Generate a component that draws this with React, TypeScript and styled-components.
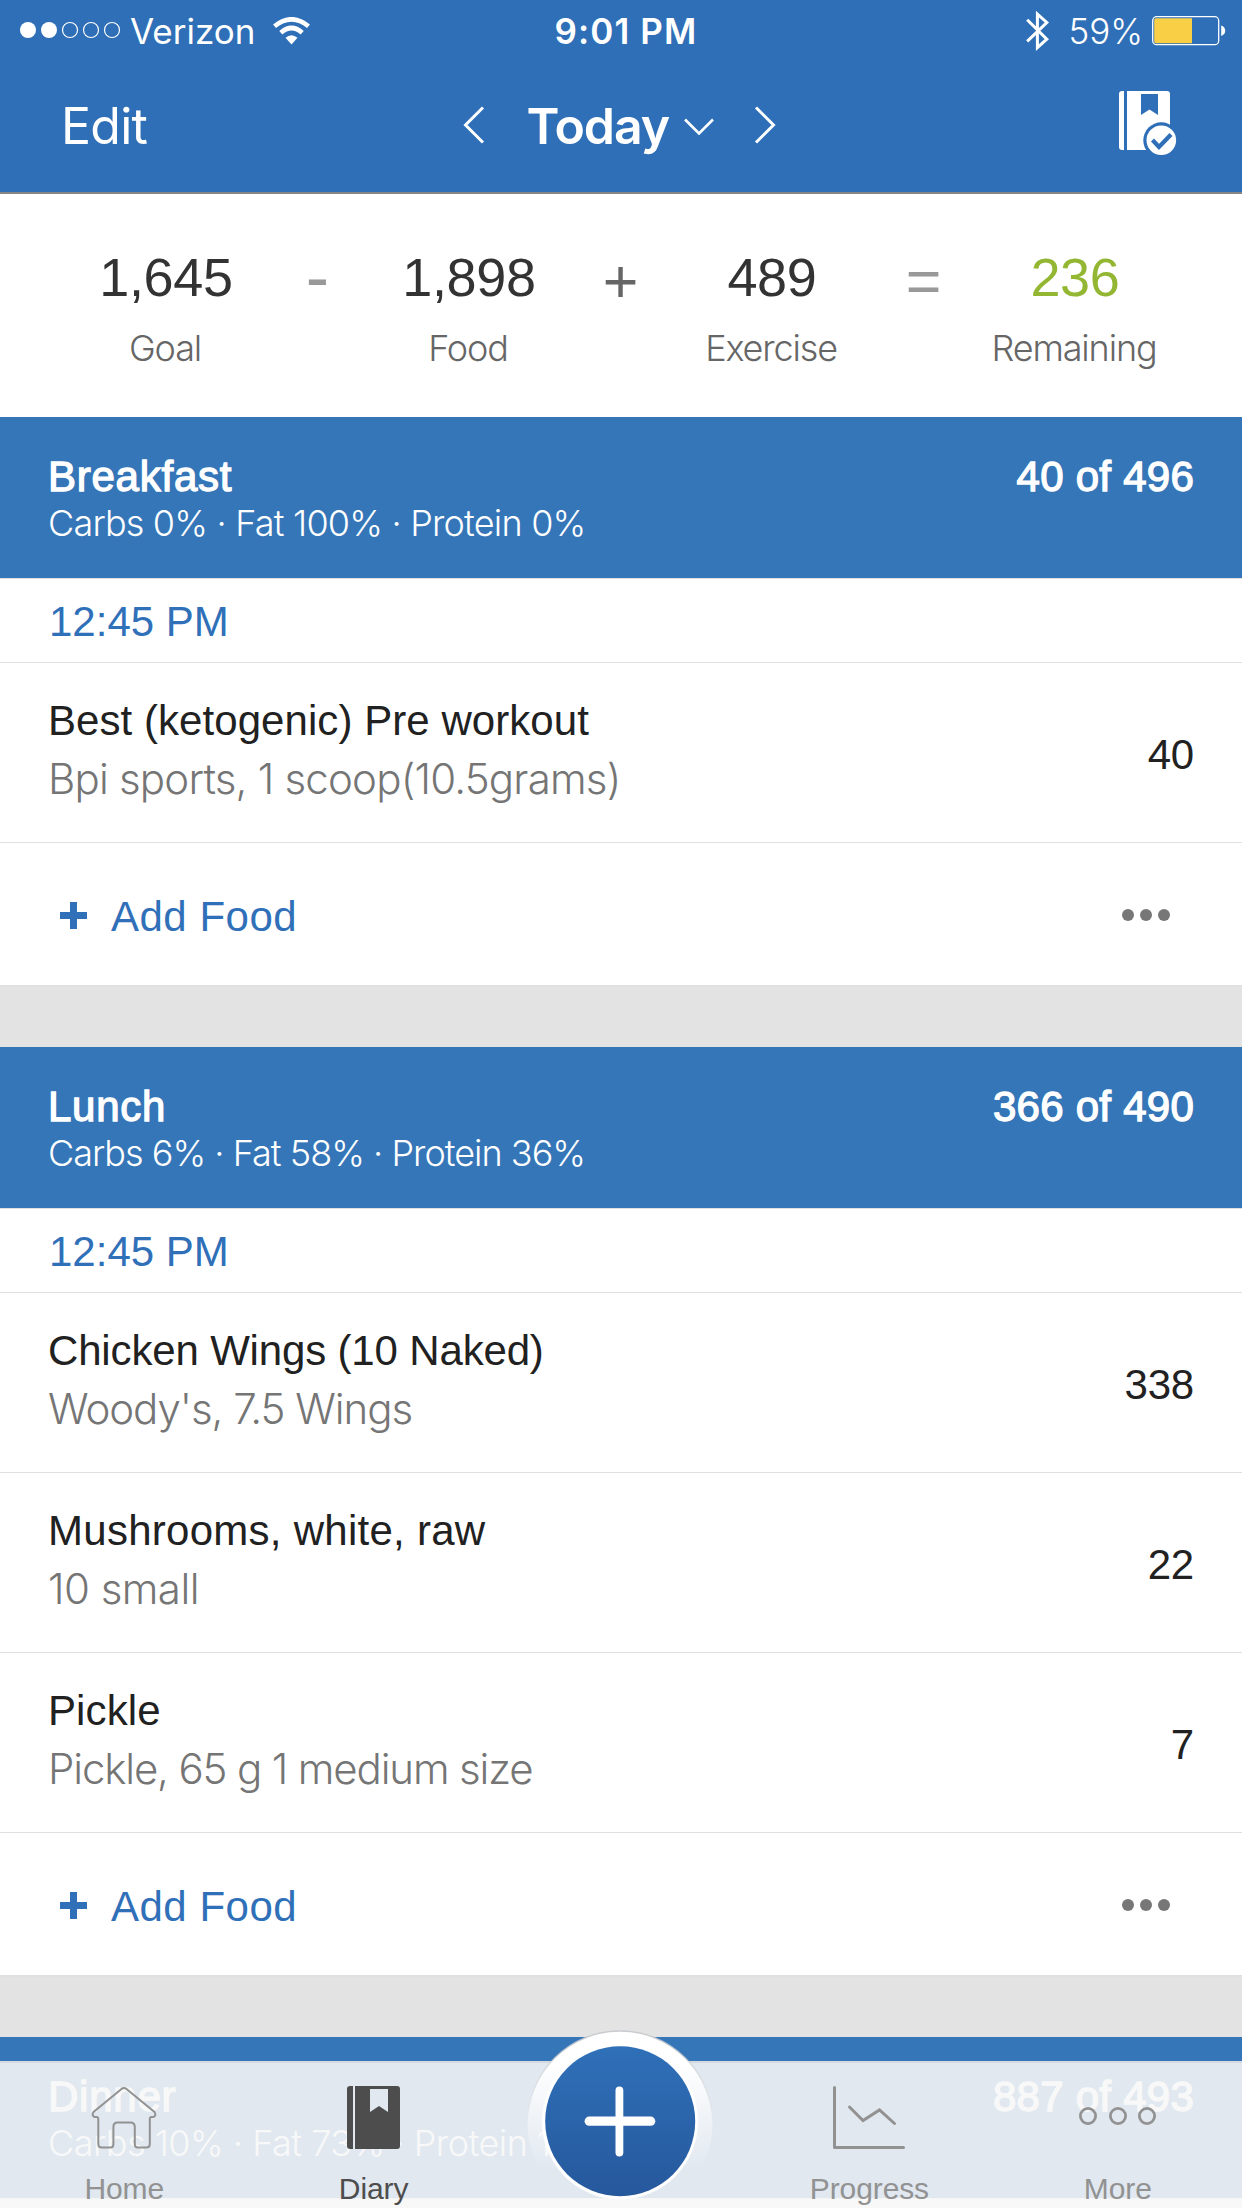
import React from "react";
import styled, { createGlobalStyle } from "styled-components";

const GlobalStyle = createGlobalStyle`
  *, *::before, *::after { box-sizing: border-box; }
  html, body { margin: 0; padding: 0; background: #fff; }
  svg { display: block; flex: none; }
`;

const helvetica = `"Liberation Sans", Arial, sans-serif`;
const system = `Inter, "Liberation Sans", sans-serif`;

const Screen = styled.div`
  position: relative;
  width: 1242px;
  height: 2208px;
  overflow: hidden;
  background: #fff;
  font-family: ${helvetica};
  color: #212121;
`;

/* ---------- header ---------- */

const Header = styled.header`
  height: 194px;
  background: #2f6fb7;
  border-bottom: 2px solid #858585;
  color: #fff;
  font-family: ${system};
`;

const StatusBar = styled.div`
  display: grid;
  grid-template-columns: 1fr auto 1fr;
  align-items: center;
  height: 62px;
  padding: 0 16px 0 19px;
  font-size: 35px;
  line-height: 62px;
`;

const StatusGroup = styled.div<{ $end?: boolean }>`
  display: flex;
  align-items: center;
  justify-content: ${(p) => (p.$end ? "flex-end" : "flex-start")};
`;

const Carrier = styled.span`
  margin: 0 18px 0 9px;
`;

const Clock = styled.span`
  padding-left: 7px;
  font-weight: 600;
  letter-spacing: 1.1px;
`;

const BatteryLevel = styled.span`
  margin: 0 9px 0 18px;
  font-weight: 300;
`;

const NavBar = styled.nav`
  display: grid;
  grid-template-columns: 1fr auto 1fr;
  align-items: center;
  height: 128px;
  padding: 0 65px 0 61px;
  font-size: 50px;
  line-height: 60px;
`;

const EditButton = styled.span`
  letter-spacing: -0.76px;
`;

const DatePicker = styled.div`
  display: flex;
  align-items: center;
`;

const DateLabel = styled.span`
  width: 143px;
  margin: 0 14px 0 42px;
  font-weight: 600;
  letter-spacing: -1.1px;
  white-space: nowrap;
`;

const NextDay = styled.span`
  margin-left: 40px;
`;

const DiaryAction = styled.span`
  justify-self: end;
  margin-top: -6px;
`;

/* ---------- summary ---------- */

const Summary = styled.section`
  display: grid;
  grid-template-columns: 180px 123px 180px 123px 180px 123px 180px;
  height: 223px;
  padding: 53px 76px 0;
`;

const Stat = styled.div`
  display: flex;
  flex-direction: column;
  align-items: center;
`;

const StatValue = styled.div<{ $color?: string }>`
  font-size: 54px;
  line-height: 60px;
  letter-spacing: -0.3px;
  color: ${(p) => p.$color || "#333"};
`;

const StatLabel = styled.div`
  margin-top: 19px;
  padding-right: 2px;
  font: 300 36px / 44px ${system};
  letter-spacing: -1.15px;
  color: #666;
`;

const Operator = styled.div<{ $size: number; $shift: number; $color: string }>`
  padding-top: ${(p) => p.$shift}px;
  text-align: center;
  font-size: ${(p) => p.$size}px;
  line-height: 60px;
  color: ${(p) => p.$color};
`;

/* ---------- meals ---------- */

const MealHeader = styled.div`
  height: 161px;
  padding: 35px 48px 0 48px;
  background: #3576b8;
  color: #fff;
`;

const MealTitleRow = styled.div`
  display: flex;
  justify-content: space-between;
  height: 49px;
  font-size: 42px;
  line-height: 50px;
  letter-spacing: 0.75px;
  -webkit-text-stroke: 1.3px currentColor;
`;

const MealTotal = styled.span`
  letter-spacing: 0.25px;
`;

const Macros = styled.div<{ $tracking: number }>`
  font: 300 36px / 44px ${system};
  letter-spacing: ${(p) => p.$tracking}px;
  white-space: nowrap;
`;

const TimeRow = styled.div`
  height: 85px;
  padding: 18px 47px 0 49px;
  border-top: 1px solid #e0e0e0;
  border-bottom: 1px solid #e0e0e0;
  font-size: 42px;
  line-height: 50px;
  color: #2f70b9;
`;

const FoodRow = styled.div`
  display: flex;
  justify-content: space-between;
  height: 180px;
  padding: 33px 48px 0 48px;
  border-bottom: 1px solid #e0e0e0;
  font-size: 42px;
  line-height: 50px;
`;

const FoodInfo = styled.div`
  display: flex;
  flex-direction: column;
  gap: 8px;
`;

const FoodName = styled.div<{ $tracking: number }>`
  letter-spacing: ${(p) => p.$tracking}px;
`;

const Portion = styled.div<{ $tracking: number }>`
  font-family: ${system};
  font-weight: 300;
  letter-spacing: ${(p) => p.$tracking}px;
  color: #757575;
`;

const Calories = styled.div`
  padding-top: 34px;
  letter-spacing: -0.2px;
`;

const AddRow = styled.div`
  display: flex;
  align-items: center;
  height: 142px;
  padding: 2px 72px 0 60px;
  font-size: 42px;
  line-height: 50px;
  color: #2f70b9;
`;

const AddLabel = styled.span`
  flex: 1;
  padding: 4px 0 0 24px;
  letter-spacing: 0.5px;
`;

const Spacer = styled.div`
  height: 62px;
  background: #e3e3e3;
  border-top: 2px solid #e0e0e0;
`;

const SectionEnd = styled.div`
  height: 1px;
  background: #e0e0e0;
`;

/* ---------- tab bar ---------- */

const TabBar = styled.nav`
  position: absolute;
  left: 0;
  right: 0;
  bottom: 0;
  display: grid;
  grid-template-columns: repeat(5, 1fr);
  height: 147px;
  border-top: 2px solid rgba(226, 226, 226, 0.93);
  background: rgba(247, 247, 247, 0.887);
  background-clip: padding-box;
`;

const Tab = styled.div<{ $active?: boolean }>`
  display: flex;
  flex-direction: column;
  align-items: center;
  padding: 23px 0 0 ${(p) => (p.$active ? 2 : 0)}px;
  color: ${(p) => (p.$active ? "#4d4d4d" : "#929292")};
`;

const TabLabel = styled.span`
  margin-top: 23px;
  font-size: 30px;
  line-height: 34px;
  letter-spacing: -0.1px;
`;

const AddTab = styled.div`
  position: relative;
`;

const AddButton = styled.div`
  position: absolute;
  left: 28px;
  top: -35px;
`;

/* ---------- icons ---------- */

const SignalDots = () => (
  <svg width="102" height="20" viewBox="0 0 102 20">
    {[0, 1, 2, 3, 4].map((i) => (
      <circle
        key={i}
        cx={9 + i * 21}
        cy={9}
        r={i < 2 ? 8 : 7.5}
        fill={i < 2 ? "#fff" : "none"}
        stroke={i < 2 ? "none" : "#fff"}
        strokeWidth="1.2"
      />
    ))}
  </svg>
);

const WifiIcon = () => (
  <svg width="37" height="29" viewBox="0 0 37 29">
    <path d="M18.500 27.500 L12.500 20.800 Q18.500 15.700 24.500 20.800 Z" fill="#fff" />
    <path d="M7.800 15.800 Q18.500 6.200 29.200 15.800" fill="none" stroke="#fff" strokeWidth="4.600" />
    <path d="M1.500 9.200 Q18.500 -4.600 35.500 9.200" fill="none" stroke="#fff" strokeWidth="4.600" />
  </svg>
);

const BluetoothIcon = () => (
  <svg width="24" height="42" viewBox="0 0 24 42">
    <path d="M1.200 9.700 L20.800 29.200 L11.400 37.600 V4.200 L20.800 12.500 L1.200 31.400" fill="none" stroke="#fff" strokeWidth="3" />
  </svg>
);

const BatteryIcon = () => (
  <svg width="74" height="30" viewBox="0 0 74 30">
    <rect x="0.700" y="0.700" width="66" height="28" rx="4" fill="none" stroke="#fff" strokeWidth="1.300" />
    <path d="M4 2.300 H40 V27.200 H4 Q2.200 27.200 2.200 25 V4.500 Q2.200 2.300 4 2.300 Z" fill="#f8cf45" />
    <path d="M69.200 9.600 Q73.200 11 73.200 14.800 Q73.200 18.600 69.200 20 Z" fill="#fff" />
  </svg>
);

const SideChevron = ({ right }: { right?: boolean }) => (
  <svg width="22" height="40" viewBox="0 0 22 40">
    <path
      d={right ? "M2 1.500 L19.500 19 L2 36.500" : "M20 1.500 L2.500 19 L20 36.500"}
      fill="none"
      stroke="#fff"
      strokeWidth="3"
    />
  </svg>
);

const DownChevron = () => (
  <svg width="30" height="18" viewBox="0 0 30 18">
    <path d="M1 2.500 L15 16.500 L29 2.500" fill="none" stroke="#fff" strokeWidth="2.600" />
  </svg>
);

const DiaryCheckIcon = () => (
  <svg width="58" height="65" viewBox="0 0 58 65">
    <path d="M3 0 H5 V59 H3 Q0 59 0 56 V3 Q0 0 3 0 Z" fill="#fff" />
    <path d="M8 0 H48 Q51 0 51 3 V59 H8 Z" fill="#fff" />
    <path d="M22 3 H39 V24 L30.500 18.500 L22 24 Z" fill="#2f6fb7" />
    <circle cx="42.300" cy="49.300" r="18" fill="#2f6fb7" />
    <circle cx="42.300" cy="49.300" r="14.800" fill="#fff" />
    <path d="M33.500 49 L40 56 L52 43.500" fill="none" stroke="#2f6fb7" strokeWidth="4.200" />
  </svg>
);

const PlusIcon = () => (
  <svg width="27" height="27" viewBox="0 0 27 27">
    <path d="M10 0 H17 V10 H27 V17 H17 V27 H10 V17 H0 V10 H10 Z" fill="#2f70b9" />
  </svg>
);

const EllipsisIcon = () => (
  <svg width="48" height="12" viewBox="0 0 48 12">
    {[6, 24, 42].map((x) => (
      <circle key={x} cx={x} cy="6" r="6" fill="#777" />
    ))}
  </svg>
);

const HomeIcon = () => (
  <svg width="66" height="63" viewBox="0 0 66 63" fill="none" stroke="currentColor" strokeWidth="2">
    <path d="M30.500 3 Q33 1.200 35.500 3 L63.500 26 Q65 28 63.800 30 Q63 31.300 60.500 31 Q58.800 31 58.800 33 V58 Q58.800 61.500 55.500 61.500 H47 Q43.800 61.500 43.800 58.500 V41 Q43.800 36.500 39.500 36.500 H26.500 Q22.400 36.500 22.400 41 V58.500 Q22.400 61.500 19.500 61.500 H11 Q7.300 61.500 7.300 58 V33 Q7.300 31 5.500 31 Q3 31.300 2.200 30 Q1 28 2.500 26 Z" />
  </svg>
);

const DiaryIcon = () => (
  <svg width="53" height="63" viewBox="0 0 53 63">
    <path d="M3 0 H6 V63 H3 Q0 63 0 60 V3 Q0 0 3 0 Z" fill="currentColor" />
    <path
      fillRule="evenodd"
      d="M8 0 H50 Q53 0 53 3 V60 Q53 63 50 63 H8 Z M23 3 V26 L32 20 L41 26 V3 Z"
      fill="currentColor"
    />
  </svg>
);

const ProgressIcon = () => (
  <svg width="72" height="63" viewBox="0 0 72 63" fill="none" stroke="currentColor" strokeWidth="3" strokeLinecap="round" strokeLinejoin="round">
    <path d="M1.500 1.500 V61.500 H70.500" />
    <path d="M16.500 21 L30 34.500 L46.500 24 L61.500 37.500" strokeLinejoin="miter" />
  </svg>
);

const MoreIcon = () => (
  <svg width="78" height="63" viewBox="0 0 78 63" fill="none" stroke="currentColor" strokeWidth="2.800">
    <circle cx="9" cy="30" r="7.600" />
    <circle cx="39" cy="30" r="7.600" />
    <circle cx="68" cy="30" r="7.600" />
  </svg>
);

const AddButtonIcon = () => (
  <svg width="190" height="176" viewBox="0 0 190 176">
    <defs>
      <linearGradient id="halo" x1="0" y1="0" x2="0" y2="1">
        <stop offset="0.180" stopColor="#fff" />
        <stop offset="0.760" stopColor="#fff" stopOpacity="0" />
      </linearGradient>
      <linearGradient id="halo-edge" x1="0" y1="0" x2="0" y2="1">
        <stop offset="0" stopColor="#c4c7cb" stopOpacity="0.900" />
        <stop offset="0.500" stopColor="#c4c7cb" stopOpacity="0" />
      </linearGradient>
      <linearGradient id="disc" x1="0" y1="0" x2="0" y2="1">
        <stop offset="0" stopColor="#2f70b8" />
        <stop offset="1" stopColor="#26589c" />
      </linearGradient>
    </defs>
    <circle cx="95" cy="95.500" r="92.500" fill="url(#halo)" stroke="url(#halo-edge)" strokeWidth="1.500" />
    <circle cx="95" cy="93.500" r="78" fill="#fff" />
    <circle cx="95.200" cy="93.200" r="75" fill="url(#disc)" />
    <path d="M94.400 62.500 V124.500" stroke="#fff" strokeWidth="7.800" strokeLinecap="round" />
    <path d="M64.200 93.200 H125.700" stroke="#fff" strokeWidth="9.200" strokeLinecap="round" />
  </svg>
);

/* ---------- data ---------- */

type Label = { text: string; tracking: number };
type Food = { name: Label; portion: Label; calories: number };
type MealHeadingData = { title: string; total: string; macros: Label };
type MealData = MealHeadingData & { time: string; foods: Food[] };

const meals: MealData[] = [
  {
    title: "Breakfast",
    total: "40 of 496",
    macros: { text: "Carbs 0% · Fat 100% · Protein 0%", tracking: -0.8 },
    time: "12:45 PM",
    foods: [
      {
        name: { text: "Best (ketogenic) Pre workout", tracking: 0.06 },
        portion: { text: "Bpi sports, 1 scoop(10.5grams)", tracking: -0.8 },
        calories: 40,
      },
    ],
  },
  {
    title: "Lunch",
    total: "366 of 490",
    macros: { text: "Carbs 6% · Fat 58% · Protein 36%", tracking: -0.98 },
    time: "12:45 PM",
    foods: [
      {
        name: { text: "Chicken Wings (10 Naked)", tracking: -0.16 },
        portion: { text: "Woody's, 7.5 Wings", tracking: -1.05 },
        calories: 338,
      },
      {
        name: { text: "Mushrooms, white, raw", tracking: 0.27 },
        portion: { text: "10 small", tracking: -0.55 },
        calories: 22,
      },
      {
        name: { text: "Pickle", tracking: 0.1 },
        portion: { text: "Pickle, 65 g 1 medium size", tracking: -1.15 },
        calories: 7,
      },
    ],
  },
];

const dinner: MealHeadingData = {
  title: "Dinner",
  total: "887 of 493",
  macros: { text: "Carbs 10% · Fat 73% · Protein 17%", tracking: -0.5 },
};

const MealHeading = ({ title, total, macros }: MealHeadingData) => (
  <MealHeader>
    <MealTitleRow>
      <span>{title}</span>
      <MealTotal>{total}</MealTotal>
    </MealTitleRow>
    <Macros $tracking={macros.tracking}>{macros.text}</Macros>
  </MealHeader>
);

const Meal = ({ title, total, macros, time, foods }: MealData) => (
  <section>
    <MealHeading title={title} total={total} macros={macros} />
    <TimeRow>{time}</TimeRow>
    {foods.map(({ name, portion, calories }) => (
      <FoodRow key={name.text}>
        <FoodInfo>
          <FoodName $tracking={name.tracking}>{name.text}</FoodName>
          <Portion $tracking={portion.tracking}>{portion.text}</Portion>
        </FoodInfo>
        <Calories>{calories}</Calories>
      </FoodRow>
    ))}
    <AddRow>
      <PlusIcon />
      <AddLabel>Add Food</AddLabel>
      <EllipsisIcon />
    </AddRow>
    <Spacer />
  </section>
);

export default function App() {
  return (
    <Screen>
      <GlobalStyle />
      <Header>
        <StatusBar>
          <StatusGroup>
            <SignalDots />
            <Carrier>Verizon</Carrier>
            <WifiIcon />
          </StatusGroup>
          <Clock>9:01 PM</Clock>
          <StatusGroup $end>
            <BluetoothIcon />
            <BatteryLevel>59%</BatteryLevel>
            <BatteryIcon />
          </StatusGroup>
        </StatusBar>
        <NavBar>
          <EditButton>Edit</EditButton>
          <DatePicker>
            <SideChevron />
            <DateLabel>Today</DateLabel>
            <DownChevron />
            <NextDay>
              <SideChevron right />
            </NextDay>
          </DatePicker>
          <DiaryAction>
            <DiaryCheckIcon />
          </DiaryAction>
        </NavBar>
      </Header>

      <Summary>
        <Stat>
          <StatValue>1,645</StatValue>
          <StatLabel>Goal</StatLabel>
        </Stat>
        <Operator $size={70} $shift={0} $color="#999">-</Operator>
        <Stat>
          <StatValue>1,898</StatValue>
          <StatLabel>Food</StatLabel>
        </Stat>
        <Operator $size={61} $shift={4} $color="#666">+</Operator>
        <Stat>
          <StatValue>489</StatValue>
          <StatLabel>Exercise</StatLabel>
        </Stat>
        <Operator $size={61} $shift={4} $color="#999">=</Operator>
        <Stat>
          <StatValue $color="#93b733">236</StatValue>
          <StatLabel>Remaining</StatLabel>
        </Stat>
      </Summary>

      {meals.map((meal) => (
        <Meal key={meal.title} {...meal} />
      ))}
      <MealHeading {...dinner} />
      <SectionEnd />

      <TabBar>
        <Tab>
          <HomeIcon />
          <TabLabel>Home</TabLabel>
        </Tab>
        <Tab $active>
          <DiaryIcon />
          <TabLabel>Diary</TabLabel>
        </Tab>
        <AddTab>
          <AddButton>
            <AddButtonIcon />
          </AddButton>
        </AddTab>
        <Tab>
          <ProgressIcon />
          <TabLabel>Progress</TabLabel>
        </Tab>
        <Tab>
          <MoreIcon />
          <TabLabel>More</TabLabel>
        </Tab>
      </TabBar>
    </Screen>
  );
}
